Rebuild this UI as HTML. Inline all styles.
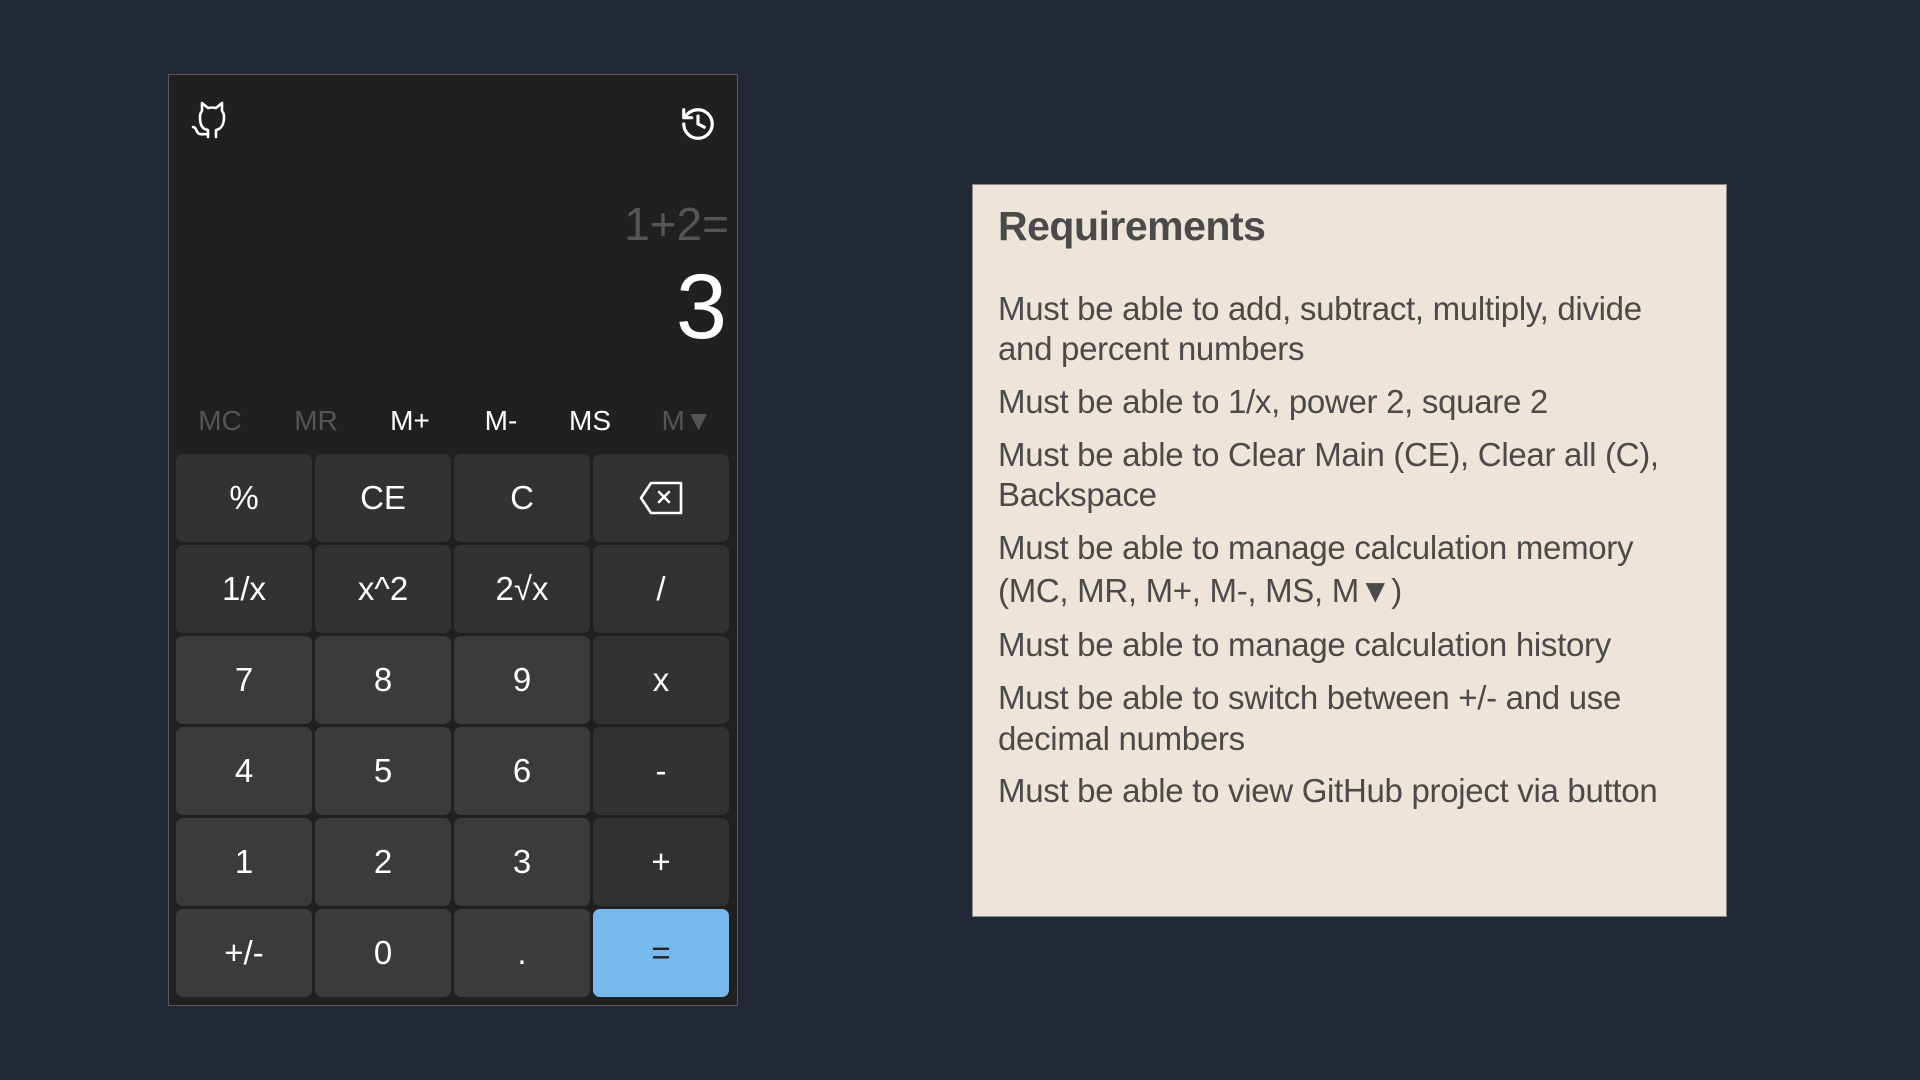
<!DOCTYPE html>
<html><head><meta charset="utf-8"><style>
*{margin:0;padding:0;box-sizing:border-box}
body{width:1920px;height:1080px;background:#222836;font-family:"Liberation Sans",Arial,sans-serif;position:relative;overflow:hidden}
.calc{position:absolute;left:168px;top:74px;width:570px;height:932px;background:#202020;border:1px solid #5a5a5a}
.b{position:absolute;width:136px;height:88px;border-radius:7px;background:#323232;color:#fff;font-size:33px;display:flex;align-items:center;justify-content:center}
.d{background:#3b3b3b}
.eq{background:#76b9ec;color:#222}
.m{position:absolute;top:330px;font-size:28px;transform:translateX(-50%);color:#fff}
.g{color:#555}
.req{position:absolute;left:972px;top:184px;width:755px;height:733px;background:#ede5d9;border:1px solid #8a8a8a;color:#4a4a4a}
.req h1{position:absolute;left:25px;top:18px;font-size:41px;font-weight:bold;letter-spacing:-0.5px}
.req p{position:absolute;left:25px;font-size:33px;white-space:nowrap;letter-spacing:-0.3px}
</style></head><body>
<div class="calc">
<svg style="position:absolute;left:18px;top:24px" width="48" height="46" viewBox="0 0 48 46" fill="none" stroke="#fff" stroke-width="2.6" stroke-linecap="round" stroke-linejoin="round">
<path d="M21 38 V31 C14 30 13 24 13 18 C13 15 14 13 15 12 V4 L21 9 C23 8.5 27 8.5 29 9 L35 4 V12 C36 13 37 15 37 18 C37 24 35 30 29 31 V38"/>
<path d="M6 28 C9 28 9 32 11 34 C13 36 16 35 21 35"/>
</svg>
<svg style="position:absolute;left:510px;top:30px" width="38" height="38" viewBox="0 0 24 24" fill="none" stroke="#fff" stroke-width="2" stroke-linecap="round" stroke-linejoin="round">
<path d="M3 12a9 9 0 1 0 9-9 9.75 9.75 0 0 0-6.74 2.74L3 8"/><path d="M3 3v5h5"/><path d="M12 7v5l4 2"/>
</svg>
<div style="position:absolute;right:8px;top:122px;font-size:46px;color:#555">1+2=</div>
<div style="position:absolute;right:10px;top:186px;font-size:92px;color:#fff;line-height:1">3</div>
<div class="m g" style="left:51px">MC</div>
<div class="m g" style="left:147px">MR</div>
<div class="m" style="left:241px">M+</div>
<div class="m" style="left:332px">M-</div>
<div class="m" style="left:421px">MS</div>
<div class="m g" style="left:518px">M▼</div>

<div class="b" style="left:7px;top:379px">%</div>
<div class="b" style="left:146px;top:379px">CE</div>
<div class="b" style="left:285px;top:379px">C</div>
<div class="b" style="left:424px;top:379px"><svg width="46" height="36" viewBox="0 0 46 36" fill="none" stroke="#fff" stroke-width="2.6" stroke-linejoin="round"><path d="M13 3 H43 V33 H13 L3 18 Z"/><path d="M21 12 L31 22 M31 12 L21 22" stroke-linecap="round"/></svg></div>

<div class="b" style="left:7px;top:470px">1/x</div>
<div class="b" style="left:146px;top:470px">x^2</div>
<div class="b" style="left:285px;top:470px">2√x</div>
<div class="b" style="left:424px;top:470px">/</div>

<div class="b d" style="left:7px;top:561px">7</div>
<div class="b d" style="left:146px;top:561px">8</div>
<div class="b d" style="left:285px;top:561px">9</div>
<div class="b" style="left:424px;top:561px">x</div>

<div class="b d" style="left:7px;top:652px">4</div>
<div class="b d" style="left:146px;top:652px">5</div>
<div class="b d" style="left:285px;top:652px">6</div>
<div class="b" style="left:424px;top:652px">-</div>

<div class="b d" style="left:7px;top:743px">1</div>
<div class="b d" style="left:146px;top:743px">2</div>
<div class="b d" style="left:285px;top:743px">3</div>
<div class="b" style="left:424px;top:743px">+</div>

<div class="b d" style="left:7px;top:834px">+/-</div>
<div class="b d" style="left:146px;top:834px">0</div>
<div class="b d" style="left:285px;top:834px">.</div>
<div class="b eq" style="left:424px;top:834px">=</div>
</div>

<div class="req">
<h1>Requirements</h1>
<p style="top:105px">Must be able to add, subtract, multiply, divide</p>
<p style="top:145px">and percent numbers</p>
<p style="top:198px">Must be able to 1/x, power 2, square 2</p>
<p style="top:251px">Must be able to Clear Main (CE), Clear all (C),</p>
<p style="top:291px">Backspace</p>
<p style="top:344px">Must be able to manage calculation memory</p>
<p style="top:387px">(MC, MR, M+, M-, MS, M▼)</p>
<p style="top:441px">Must be able to manage calculation history</p>
<p style="top:494px">Must be able to switch between +/- and use</p>
<p style="top:535px">decimal numbers</p>
<p style="top:587px">Must be able to view GitHub project via button</p>
</div>
</body></html>
